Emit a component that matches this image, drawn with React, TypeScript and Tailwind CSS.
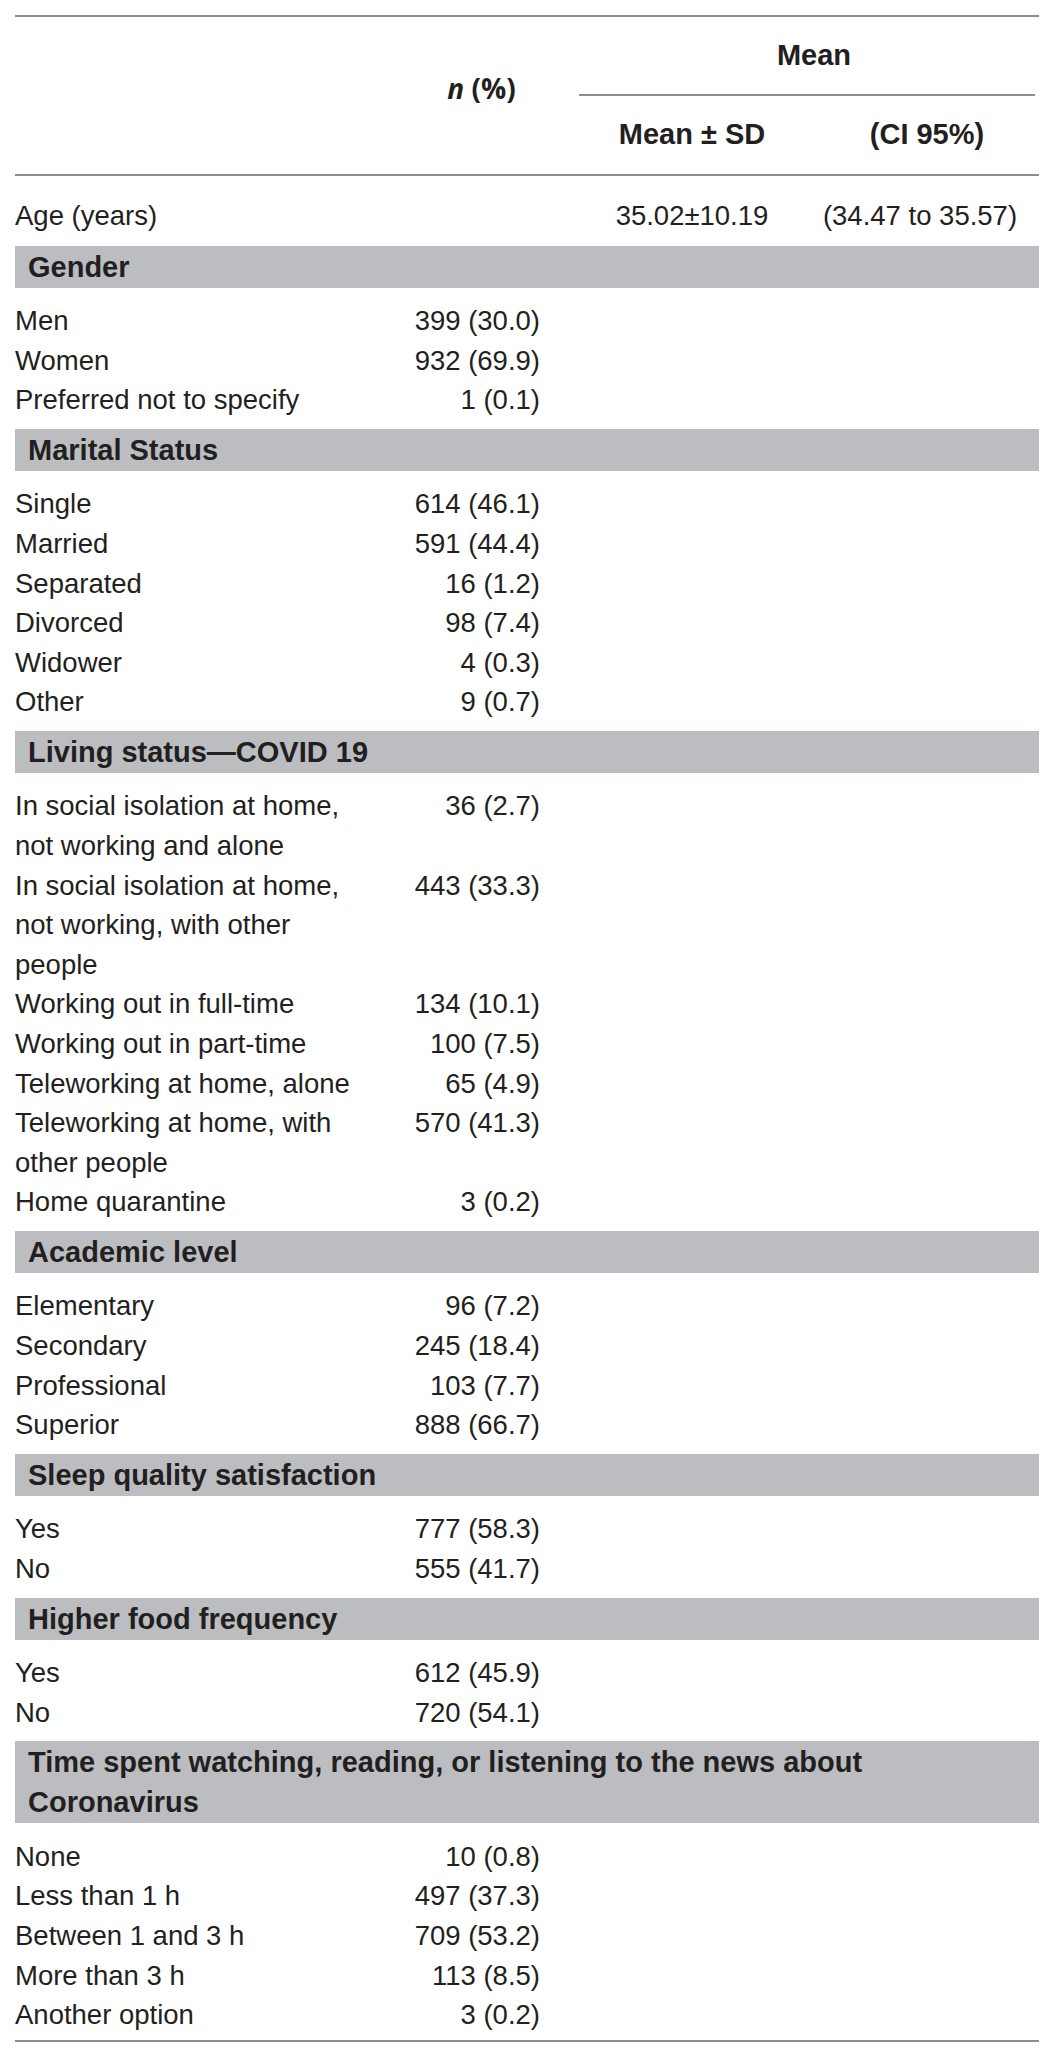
import React from "react";

type Group = {
  title: string;
  rows: [string, string][];
};

const groups: Group[] = [
  {
    title: "Gender",
    rows: [
      ["Men", "399 (30.0)"],
      ["Women", "932 (69.9)"],
      ["Preferred not to specify", "1 (0.1)"],
    ],
  },
  {
    title: "Marital Status",
    rows: [
      ["Single", "614 (46.1)"],
      ["Married", "591 (44.4)"],
      ["Separated", "16 (1.2)"],
      ["Divorced", "98 (7.4)"],
      ["Widower", "4 (0.3)"],
      ["Other", "9 (0.7)"],
    ],
  },
  {
    title: "Living status\u2014COVID 19",
    rows: [
      ["In social isolation at home,\nnot working and alone", "36 (2.7)"],
      ["In social isolation at home,\nnot working, with other\npeople", "443 (33.3)"],
      ["Working out in full-time", "134 (10.1)"],
      ["Working out in part-time", "100 (7.5)"],
      ["Teleworking at home, alone", "65 (4.9)"],
      ["Teleworking at home, with\nother people", "570 (41.3)"],
      ["Home quarantine", "3 (0.2)"],
    ],
  },
  {
    title: "Academic level",
    rows: [
      ["Elementary", "96 (7.2)"],
      ["Secondary", "245 (18.4)"],
      ["Professional", "103 (7.7)"],
      ["Superior", "888 (66.7)"],
    ],
  },
  {
    title: "Sleep quality satisfaction",
    rows: [
      ["Yes", "777 (58.3)"],
      ["No", "555 (41.7)"],
    ],
  },
  {
    title: "Higher food frequency",
    rows: [
      ["Yes", "612 (45.9)"],
      ["No", "720 (54.1)"],
    ],
  },
  {
    title: "Time spent watching, reading, or listening to the news about\nCoronavirus",
    rows: [
      ["None", "10 (0.8)"],
      ["Less than 1 h", "497 (37.3)"],
      ["Between 1 and 3 h", "709 (53.2)"],
      ["More than 3 h", "113 (8.5)"],
      ["Another option", "3 (0.2)"],
    ],
  },
];

const cols = "grid grid-cols-[355px_209px_226px_230px]";

export default function App() {
  return (
    <div className="w-[1054px] min-h-[2063px] bg-white text-[#231f20] font-['Liberation_Sans',Arial,sans-serif]">
      <div className="mx-[15px] pt-[15px]">
        {/* header */}
        <div className={`${cols} border-t-2 border-b-2 border-[#8d8d8d]`}>
          <div className="row-span-2" />
          <div className="row-span-2 flex items-center justify-center pb-4 pl-[14px] font-['Open_Sans',sans-serif] font-bold text-[28px]">
            <span>
              <i>n</i> (%)
            </span>
          </div>
          <div className="col-span-2 h-[79px] flex items-center justify-center pl-[14px] border-b-2 border-[#8d8d8d] font-bold text-[29px]">
            Mean
          </div>
          <div className="h-[78px] flex items-center justify-center font-bold text-[29px]">
            Mean ± SD
          </div>
          <div className="h-[78px] flex items-center justify-center pl-[14px] font-bold text-[29px]">
            (CI 95%)
          </div>
        </div>

        {/* age */}
        <div className={`${cols} pt-5 pb-[10px] text-[27.5px] leading-[39.6px]`}>
          <div>Age (years)</div>
          <div />
          <div className="text-center">35.02±10.19</div>
          <div className="text-center">(34.47 to 35.57)</div>
        </div>

        {groups.map((g, gi) => (
          <div key={g.title}>
            <div className="bg-[#bcbdc0] px-[13px] py-px font-bold text-[29px] leading-[40px] whitespace-pre-line">
              {g.title}
            </div>
            <div
              className={
                gi === groups.length - 1
                  ? "pt-[13.5px] pb-[5.5px]"
                  : "pt-[13.5px] pb-[9px]"
              }
            >
              {g.rows.map(([label, value]) => (
                <div
                  key={label}
                  className={`${cols} text-[27.5px] leading-[39.6px]`}
                >
                  <div className="whitespace-pre-line">{label}</div>
                  <div className="text-right pr-[39px]">{value}</div>
                  <div />
                  <div />
                </div>
              ))}
            </div>
          </div>
        ))}
        <div className="border-b-2 border-[#8d8d8d]" />
      </div>
    </div>
  );
}
